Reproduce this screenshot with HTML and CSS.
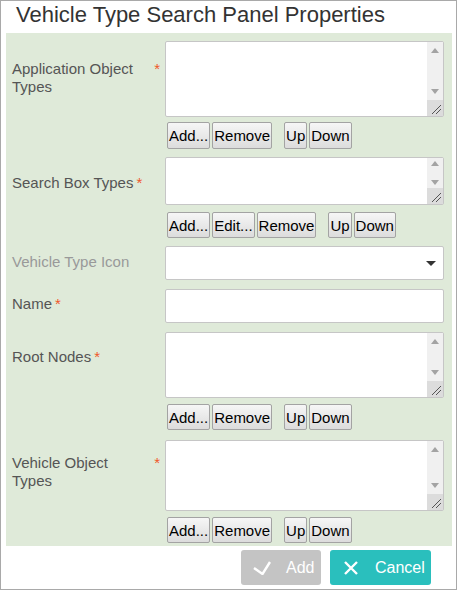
FILE: index.html
```html
<!DOCTYPE html>
<html>
<head>
<meta charset="utf-8">
<link rel="stylesheet" href="styles.css">
</head>
<body>
<div class="window">
  <h1 class="title">Vehicle Type Search Panel Properties</h1>
  <div class="panel">
    <div class="row r1">
      <label class="lbl p19"><span class="txt">Application Object Types</span><span class="req">*</span></label>
      <div class="field">
        <div class="ta h76">
          <textarea class="ta-in"></textarea>
          <div class="sb">
            <div class="sb-btn"><svg width="8" height="5" viewBox="0 0 8 5"><polygon points="0,5 8,5 4,0" fill="#a3a3a3"/></svg></div>
            <div class="sb-track"></div>
            <div class="sb-btn"><svg width="8" height="5" viewBox="0 0 8 5"><polygon points="0,0 8,0 4,5" fill="#a3a3a3"/></svg></div>
            <div class="sb-corner"><svg width="16" height="16" viewBox="0 0 16 16"><path d="M14 5 L5 14 M14 9 L9 14" stroke="#555" stroke-width="1"/></svg></div>
          </div>
        </div>
        <div class="btns b1">
          <button class="b">Add...</button><button class="b">Remove</button><button class="b sep">Up</button><button class="b">Down</button>
        </div>
      </div>
    </div>
    <div class="row r2">
      <label class="lbl p17"><span class="txt">Search Box Types</span><span class="req">*</span></label>
      <div class="field">
        <div class="ta h48">
          <textarea class="ta-in"></textarea>
          <div class="sb">
            <div class="sb-btn sm"><svg width="8" height="5" viewBox="0 0 8 5"><polygon points="0,5 8,5 4,0" fill="#a3a3a3"/></svg></div>
            <div class="sb-track"></div>
            <div class="sb-btn sm"><svg width="8" height="5" viewBox="0 0 8 5"><polygon points="0,0 8,0 4,5" fill="#a3a3a3"/></svg></div>
            <div class="sb-corner"><svg width="16" height="16" viewBox="0 0 16 16"><path d="M14 5 L5 14 M14 9 L9 14" stroke="#555" stroke-width="1"/></svg></div>
          </div>
        </div>
        <div class="btns b2">
          <button class="b">Add...</button><button class="b">Edit...</button><button class="b">Remove</button><button class="b sep">Up</button><button class="b">Down</button>
        </div>
      </div>
    </div>
    <div class="row r3">
      <label class="lbl muted p7"><span class="txt">Vehicle Type Icon</span></label>
      <div class="field">
        <div class="select">
          <svg width="10" height="5" viewBox="0 0 10 5"><polygon points="0,0 10,0 5,5" fill="#333"/></svg>
        </div>
      </div>
    </div>
    <div class="row r4">
      <label class="lbl p6"><span class="txt">Name</span><span class="req">*</span></label>
      <div class="field">
        <input class="inp" type="text">
      </div>
    </div>
    <div class="row r5">
      <label class="lbl p16"><span class="txt">Root Nodes</span><span class="req">*</span></label>
      <div class="field">
        <div class="ta h66">
          <textarea class="ta-in"></textarea>
          <div class="sb">
            <div class="sb-btn"><svg width="8" height="5" viewBox="0 0 8 5"><polygon points="0,5 8,5 4,0" fill="#a3a3a3"/></svg></div>
            <div class="sb-track"></div>
            <div class="sb-btn"><svg width="8" height="5" viewBox="0 0 8 5"><polygon points="0,0 8,0 4,5" fill="#a3a3a3"/></svg></div>
            <div class="sb-corner"><svg width="16" height="16" viewBox="0 0 16 16"><path d="M14 5 L5 14 M14 9 L9 14" stroke="#555" stroke-width="1"/></svg></div>
          </div>
        </div>
        <div class="btns b3">
          <button class="b">Add...</button><button class="b">Remove</button><button class="b sep">Up</button><button class="b">Down</button>
        </div>
      </div>
    </div>
    <div class="row r6">
      <label class="lbl p14"><span class="txt">Vehicle Object Types</span><span class="req">*</span></label>
      <div class="field">
        <div class="ta h71">
          <textarea class="ta-in"></textarea>
          <div class="sb">
            <div class="sb-btn"><svg width="8" height="5" viewBox="0 0 8 5"><polygon points="0,5 8,5 4,0" fill="#a3a3a3"/></svg></div>
            <div class="sb-track"></div>
            <div class="sb-btn"><svg width="8" height="5" viewBox="0 0 8 5"><polygon points="0,0 8,0 4,5" fill="#a3a3a3"/></svg></div>
            <div class="sb-corner"><svg width="16" height="16" viewBox="0 0 16 16"><path d="M14 5 L5 14 M14 9 L9 14" stroke="#555" stroke-width="1"/></svg></div>
          </div>
        </div>
        <div class="btns b3">
          <button class="b">Add...</button><button class="b">Remove</button><button class="b sep">Up</button><button class="b">Down</button>
        </div>
      </div>
    </div>
  </div>
  <div class="footer">
    <button class="act add">
      <svg width="18" height="14" viewBox="0 0 18 14"><polyline points="1,7 9.5,13 17,1" fill="none" stroke="#fff" stroke-width="2.4"/></svg>
      <span>Add</span>
    </button>
    <button class="act cancel">
      <svg width="14" height="14" viewBox="0 0 14 14"><path d="M1 1 L13 13 M13 1 L1 13" stroke="#fff" stroke-width="2.4"/></svg>
      <span>Cancel</span>
    </button>
  </div>
</div>
</body>
</html>
```

FILE: styles.css
```css
html, body {
  margin: 0;
  padding: 0;
  background: #fff;
}
.window {
  width: 457px;
  height: 590px;
  box-sizing: border-box;
  border: 1px solid #a9a9a9;
  font-family: "Liberation Sans", Arial, sans-serif;
  display: flex;
  flex-direction: column;
}
.title {
  margin: 0;
  padding: 0 0 0 15px;
  height: 32px;
  box-sizing: border-box;
  font-size: 22px;
  line-height: 27px;
  font-weight: normal;
  color: #333;
}
.panel {
  margin: 0 4px 0 5px;
  background: #dfead9;
  padding: 8px 8px 3px 6px;
}
.row {
  display: grid;
  grid-template-columns: 148px 1fr;
  column-gap: 5px;
  align-items: start;
}
.r1, .r2 { margin-bottom: 8px; }
.r3, .r4 { margin-bottom: 9px; }
.r5 { margin-bottom: 10px; }
.lbl {
  display: flex;
  align-items: flex-start;
  font-size: 15px;
  line-height: 18px;
  color: #555;
}
.p19 { padding-top: 19px; }
.p17 { padding-top: 17px; }
.p16 { padding-top: 16px; }
.p14 { padding-top: 14px; }
.p7 { padding-top: 7px; }
.p6 { padding-top: 6px; }
.lbl.muted { color: #999; }
.txt { min-width: 0; }
.req {
  color: #f0572a;
  margin-left: 3px;
  flex: none;
}
.field {
  display: flex;
  flex-direction: column;
}
.ta {
  display: flex;
  box-sizing: border-box;
  width: 100%;
  border: 1px solid #c6c6c6;
  border-radius: 2px;
  background: #fff;
}
.ta-in {
  flex: 1;
  min-width: 0;
  border: none;
  outline: none;
  resize: none;
  margin: 0;
  padding: 2px;
  background: transparent;
  font: 14px "Liberation Sans", Arial, sans-serif;
}
.sb {
  width: 16px;
  flex: none;
  background: #f0f0f0;
  display: flex;
  flex-direction: column;
}
.sb-btn {
  height: 17px;
  display: flex;
  align-items: center;
  justify-content: center;
  flex: none;
}
.sb-btn.sm { height: 11px; }
.sb-track { flex: 1; }
.sb-corner {
  height: 16px;
  flex: none;
  background: #dcdcdc;
  display: flex;
}
.h76 { height: 76px; }
.h48 { height: 48px; }
.h66 { height: 66px; }
.h71 { height: 71px; }
.btns {
  display: flex;
  gap: 2px;
  padding-left: 2px;
}
.b1 { margin-top: 5px; }
.b2 { margin-top: 7px; }
.b3 { margin-top: 6px; }
.b {
  height: 27px;
  margin: 0;
  padding: 0 1px;
  border: 1px solid #a3a3a3;
  border-radius: 2px;
  background: linear-gradient(#f6f6f6, #dcdcdc);
  font: 15px "Liberation Sans", Arial, sans-serif;
  color: #000;
}
.b2 .b, .b3 .b { height: 26px; }
.b.sep { margin-left: 10px; }
.select {
  height: 34px;
  box-sizing: border-box;
  border: 1px solid #c6c6c6;
  border-radius: 2px;
  background: #fff;
  display: flex;
  align-items: center;
  justify-content: flex-end;
  padding: 1px 7px 0 0;
}
.inp {
  display: block;
  height: 34px;
  box-sizing: border-box;
  width: 100%;
  margin: 0;
  border: 1px solid #c6c6c6;
  border-radius: 2px;
  background: #fff;
}
.footer {
  display: flex;
  justify-content: flex-end;
  gap: 9px;
  padding-right: 25px;
  margin-top: 4px;
}
.act {
  height: 35px;
  border: none;
  border-radius: 3px;
  display: flex;
  align-items: center;
  color: #fff;
  font: 16px "Liberation Sans", Arial, sans-serif;
  margin: 0;
}
.act.add {
  width: 80px;
  background: #c4c4c4;
  padding: 0 0 0 12px;
  gap: 15px;
}
.act.cancel {
  width: 101px;
  background: #2abfbd;
  padding: 0 0 0 14px;
  gap: 17px;
}
```
